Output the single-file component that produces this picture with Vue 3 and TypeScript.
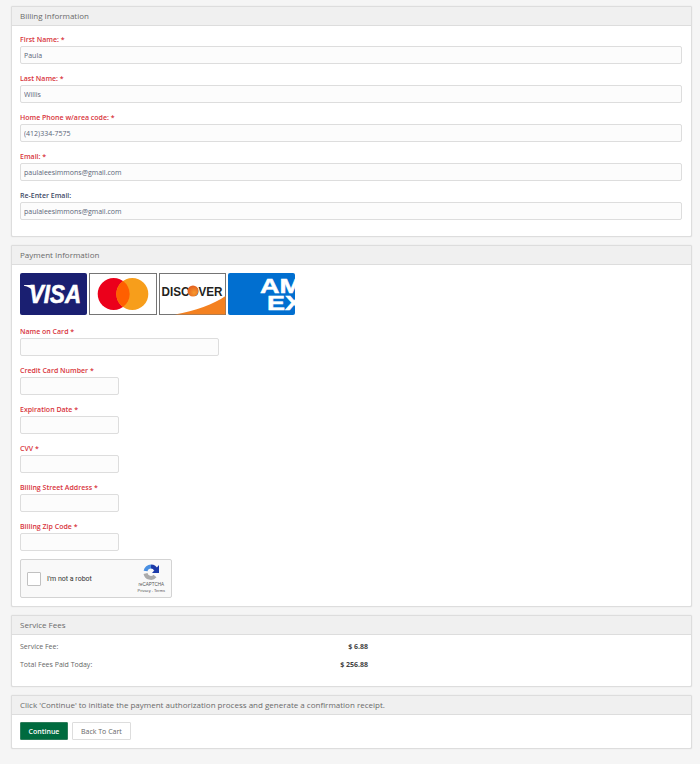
<script setup lang="ts">
interface Field {
  label: string
  value: string
  required: boolean
  dark?: boolean
}

const billing: Field[] = [
  { label: 'First Name:', value: 'Paula', required: true },
  { label: 'Last Name:', value: 'Willis', required: true },
  { label: 'Home Phone w/area code:', value: '(412)334-7575', required: true },
  { label: 'Email:', value: 'paulaleesimmons@gmail.com', required: true },
  { label: 'Re-Enter Email:', value: 'paulaleesimmons@gmail.com', required: false, dark: true },
]

const payment = [
  { label: 'Name on Card', wide: true },
  { label: 'Credit Card Number', wide: false },
  { label: 'Expiration Date', wide: false },
  { label: 'CVV', wide: false },
  { label: 'Billing Street Address', wide: false },
  { label: 'Billing Zip Code', wide: false },
]
</script>

<template>
  <div class="page">
    <section class="panel">
      <h2 class="panel-head">Billing Information</h2>
      <div class="panel-body billing">
        <div v-for="f in billing" :key="f.label" class="field">
          <label :class="{ dark: f.dark }">{{ f.label }}<span v-if="f.required"> *</span></label>
          <input type="text" :value="f.value" />
        </div>
      </div>
    </section>

    <section class="panel">
      <h2 class="panel-head">Payment Information</h2>
      <div class="panel-body pay">
        <div class="cards">
          <svg class="card" width="67" height="42" viewBox="0 0 67 42">
            <rect width="67" height="42" rx="2" fill="#1a1f71" />
            <path d="M4 12h8.500l2.500 8C12 16 8 13.500 4 12.800z" fill="#fff" />
            <text x="9" y="30" class="visa" textLength="52" lengthAdjust="spacingAndGlyphs">VISA</text>
          </svg>
          <svg class="card" width="68" height="42" viewBox="0 0 68 42">
            <rect x=".5" y=".5" width="67" height="41" fill="#fff" stroke="#757575" />
            <circle cx="24.700" cy="21" r="16" fill="#eb001b" />
            <circle cx="43.300" cy="21" r="16" fill="#f79e1b" />
            <path d="M34 8a16 16 0 0 1 0 26a16 16 0 0 1 0-26z" fill="#ff5f00" />
          </svg>
          <svg class="card" width="67" height="42" viewBox="0 0 67 42">
            <defs>
              <radialGradient id="disc-o" cx=".6" cy=".65" r=".7">
                <stop offset="0" stop-color="#f79a2e" />
                <stop offset="1" stop-color="#e2591c" />
              </radialGradient>
            </defs>
            <rect x=".5" y=".5" width="66" height="41" fill="#fff" stroke="#757575" />
            <path d="M16 41.500C36 38 55 31 66.500 23V41.500z" fill="#f48120" />
            <text x="2.500" y="22.500" class="discover" textLength="61" lengthAdjust="spacingAndGlyphs">DISCOVER</text>
            <circle cx="34" cy="18" r="5.500" fill="url(#disc-o)" />
          </svg>
          <svg class="card" width="67" height="42" viewBox="0 0 67 42">
            <rect width="67" height="42" rx="2" fill="#016fd0" />
            <text x="32" y="20" class="amex" textLength="42" lengthAdjust="spacingAndGlyphs">AM</text>
            <text x="39" y="37" class="amex" textLength="36" lengthAdjust="spacingAndGlyphs">EX</text>
          </svg>
        </div>
        <div v-for="f in payment" :key="f.label" class="field">
          <label>{{ f.label }}<span> *</span></label>
          <input type="text" :class="f.wide ? 'wide' : 'narrow'" />
        </div>
        <div class="captcha">
          <span class="check"></span>
          <span class="robot">I'm not a robot</span>
          <div class="brand">
            <svg width="16" height="16" viewBox="0 0 16 16" fill="none">
              <path d="M2.500 9.500A5.500 5.500 0 0 0 12 12" stroke="#ababab" stroke-width="4" />
              <path d="M2.600 7A5.500 5.500 0 0 1 8 2.500" stroke="#4a90e2" stroke-width="4" />
              <path d="M8 2.500A5.500 5.500 0 0 1 13 6" stroke="#1c3aa9" stroke-width="4" />
              <path d="M16 1v8H9z" fill="#1c3aa9" />
            </svg>
            <span class="brand-name">reCAPTCHA</span>
            <span class="brand-links">Privacy - Terms</span>
          </div>
        </div>
      </div>
    </section>

    <section class="panel">
      <h2 class="panel-head">Service Fees</h2>
      <div class="panel-body fees">
        <div class="fee-row"><span>Service Fee:</span><b>$ 6.88</b></div>
        <div class="fee-row"><span>Total Fees Paid Today:</span><b>$ 256.88</b></div>
      </div>
    </section>

    <section class="panel">
      <h2 class="panel-head">Click 'Continue' to initiate the payment authorization process and generate a confirmation receipt.</h2>
      <div class="panel-body actions">
        <button class="btn primary">Continue</button>
        <button class="btn">Back To Cart</button>
      </div>
    </section>
  </div>
</template>

<style>
html,
body {
  background: #f5f5f5;
}
</style>

<style scoped>
.page {
  box-sizing: border-box;
  height: 764px;
  overflow: hidden;
  padding: 6px 8px 0 11px;
  background: #f5f5f5;
  font-family: 'Open Sans', 'Liberation Sans', sans-serif;
  font-size: 7px;
  color: #666;
}

.panel {
  margin-bottom: 8px;
  background: #fff;
  border: 1px solid #ddd;
  border-radius: 2px;
  box-shadow: 0 0 1px #ccc;
}

.panel-head {
  box-sizing: border-box;
  height: 19px;
  margin: 0;
  padding: 0 8px;
  background: #f0f0f0;
  border-bottom: 1px solid #ddd;
  font-size: 8px;
  font-weight: 400;
  line-height: 18px;
  color: #6a6a6a;
}

.panel-body {
  box-sizing: border-box;
  padding: 6px 8px 0;
}

.billing {
  height: 210px;
}

.pay {
  height: 341px;
  padding-top: 8px;
}

.field {
  margin-bottom: 7px;
}

.field label {
  display: block;
  height: 14px;
  font-size: 7px;
  font-weight: 600;
  line-height: 16px;
  color: #d8343c;
}

.field label.dark {
  color: #3f4a66;
}

.field input {
  display: block;
  box-sizing: border-box;
  width: 662px;
  height: 18px;
  padding: 0 3px;
  background: #fcfcfc;
  border: 1px solid #ddd;
  border-radius: 2px;
  font: 400 7px 'Open Sans', 'Liberation Sans', sans-serif;
  color: #5a6678;
}

.field input.wide {
  width: 199px;
}

.field input.narrow {
  width: 99px;
}

.cards {
  display: flex;
  gap: 2px;
  margin-bottom: 9px;
}

.card {
  display: block;
}

.visa {
  font: italic 700 25px 'Liberation Sans', sans-serif;
  fill: #fff;
  stroke: #fff;
  stroke-width: .6px;
}

.discover {
  font: 700 12.500px 'Liberation Sans', sans-serif;
  fill: #231f20;
}

.amex {
  font: 700 20px 'Liberation Sans', sans-serif;
  fill: #fff;
  stroke: #fff;
  stroke-width: .5px;
}

.captcha {
  display: flex;
  align-items: center;
  box-sizing: border-box;
  width: 152px;
  height: 39px;
  margin-top: 8px;
  padding: 0 6px;
  background: #f9f9f9;
  border: 1px solid #d3d3d3;
  border-radius: 2px;
}

.check {
  box-sizing: border-box;
  width: 14px;
  height: 14px;
  background: #fff;
  border: 1px solid #c1c1c1;
  border-radius: 1px;
}

.robot {
  margin-left: 6px;
  font: 400 7px Roboto, 'Liberation Sans', sans-serif;
  color: #333;
}

.brand {
  display: flex;
  flex-direction: column;
  align-items: center;
  margin-left: auto;
  margin-right: 0;
  font-family: 'Liberation Sans', sans-serif;
  line-height: 6px;
  color: #555;
}

.brand-name {
  margin-top: 2px;
  font-size: 4.500px;
}

.brand-links {
  font-size: 4px;
}

.fees {
  height: 51px;
  padding-top: 3px;
}

.fee-row {
  display: flex;
  justify-content: space-between;
  width: 348px;
  height: 18px;
  line-height: 18px;
  color: #666;
}

.fee-row b {
  font-weight: 700;
  color: #444;
}

.actions {
  display: flex;
  gap: 4px;
  height: 33px;
  padding-top: 7px;
}

.btn {
  box-sizing: border-box;
  height: 18px;
  padding: 0 8px;
  background: #fff;
  border: 1px solid #ddd;
  border-radius: 1px;
  font: 400 7px 'Open Sans', 'Liberation Sans', sans-serif;
  color: #666;
}

.btn.primary {
  width: 48px;
  padding: 0;
  background: #006b3f;
  border-color: #2e7d5b;
  font-weight: 600;
  color: #fff;
}
</style>
